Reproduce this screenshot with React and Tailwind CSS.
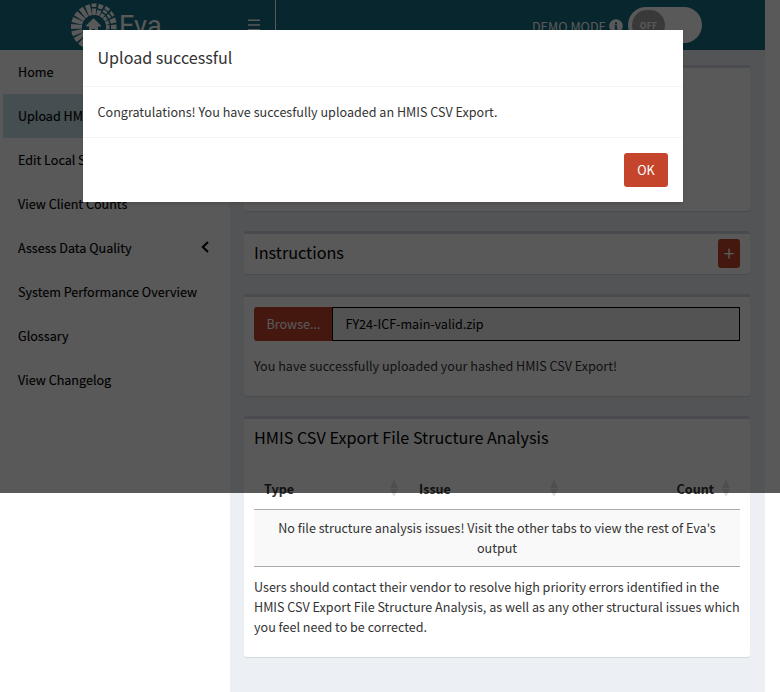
import { FaInfoCircle } from "react-icons/fa";

const NAV = [
  "Home",
  "Upload HMIS CSV Export",
  "Edit Local Settings",
  "View Client Counts",
  "Assess Data Quality",
  "System Performance Overview",
  "Glossary",
  "View Changelog",
];

// Each ray is a list of [inner, outer] radii; rays on the right are broken into segments.
const RAYS = [
  { a: -161, s: [[12, 23]] },
  { a: -143, s: [[12, 23]] },
  { a: -125, s: [[12, 23]] },
  { a: -107, s: [[12, 23]] },
  { a: -90, s: [[12, 18.5], [20, 23.5]] },
  { a: -72, s: [[12, 17.5], [19, 23.5]] },
  { a: -54, s: [[12, 16], [17.3, 20], [21, 24]] },
  { a: -36, s: [[12, 15.5], [17, 19.5], [20.8, 23.5]] },
  { a: -18, s: [[12, 15.5], [17, 23]] },
  { a: 0, s: [[12, 15.5], [17, 22.5]] },
  { a: 18, s: [[12, 23]] },
  { a: 127, s: [[12, 23]] },
  { a: 145, s: [[12, 23]] },
  { a: 163, s: [[12, 23]] },
  { a: 181, s: [[12, 23]] },
];

// Rays widen with their distance from the centre.
function segment(i, o) {
  const w = (r) => 0.8 + r * 0.075;
  return `M${94 + i} ${27 - w(i)}L${94 + o} ${27 - w(o)}V${27 + w(o)}L${94 + i} ${27 + w(i)}z`;
}

function Logo() {
  return (
    <svg className="h-[50px] w-[48px] shrink-0" viewBox="70 0 48 50" fill="white">
      {RAYS.map((r) =>
        r.s.map(([i, o]) => <path key={`${r.a}-${i}`} d={segment(i, o)} transform={`rotate(${r.a} 94 27)`} />)
      )}
      <path d="M93.5 18.200 86 25.500V26.500h3V33h3v-4h3v4h3V26.500h3V25.500z" />
    </svg>
  );
}

function Box({ className = "", children }) {
  return (
    <section className={`rounded-[3px] border-t-[3px] border-[#d2d6de] bg-white shadow-[0_1px_1px_rgba(0,0,0,0.1)] ${className}`}>
      {children}
    </section>
  );
}

function Sort() {
  return (
    <svg className="h-[17px] w-2" viewBox="0 0 8 17" fill="#dedede">
      <path d="M4 0 8 8H0zM4 17 0 9h8z" />
    </svg>
  );
}

export default function App() {
  return (
    <div className="relative h-[692px] w-[780px] overflow-hidden bg-white font-['Noto_Sans_CJK_SC',sans-serif] text-[12.58px] leading-5 text-[#333]">
      <header className="flex h-[50px] w-[765px] items-center bg-[#176d80] text-white">
        <div className="flex h-[50px] w-[230px] items-center pl-[70px]">
          <Logo />
          <span className="pl-px pt-0.5 font-['Roboto',sans-serif] text-[27px]">Eva</span>
        </div>
        <div className="flex h-[50px] w-[46px] items-center border-r border-white pl-[18px]">
          <svg className="h-3 w-3" viewBox="0 0 12 12" fill="white">
            <path d="M0 .5h12v1.400H0zM0 5.300h12v1.400H0zM0 10.100h12v1.400H0z" />
          </svg>
        </div>
        <div className="ml-auto mr-[63px] flex items-center">
          <span className="whitespace-nowrap pt-[3px]">DEMO MODE</span>
          <FaInfoCircle className="ml-[3px] mt-0.5 size-[14px]" />
          <div className="ml-[5px] flex h-9 w-[74px] items-center rounded-full bg-white pl-1">
            <span className="flex h-[30px] w-[33px] items-center justify-center rounded-full bg-[#a3a3a3] text-[8.500px] font-bold tracking-[0.3px] text-white">OFF</span>
          </div>
        </div>
      </header>

      <div className="flex w-[765px]">
        <nav className="w-[230px] bg-white text-black [-webkit-text-stroke:0.15px_black]">
          {NAV.map((n, i) => (
            <div
              key={n}
              className={`flex h-11 items-center justify-between whitespace-nowrap border-l-[3px] pl-[15px] pr-[21px] ${i === 1 ? "border-white bg-[#c6e0e6]" : "border-transparent"}`}
            >
              <span>{n}</span>
              {i === 4 && (
                <svg className="mb-[3px] h-3 w-2" viewBox="0 0 8 12" fill="none" stroke="black" strokeWidth="2">
                  <path d="M7 1 1.800 6 7 11" />
                </svg>
              )}
            </div>
          ))}
        </nav>
        <main className="flex h-[642px] w-[535px] flex-col gap-5 bg-[#ecf0f5] px-3.5 pr-[15px] pt-[15px]">
          <Box className="h-[146px]" />
          <Box className="flex h-[43px] items-start justify-between px-2.5 pt-[5px]">
            <h3 className="pt-[3px] text-[16.2px] text-black">Instructions</h3>
            <button className="flex h-[29px] w-[22px] items-center justify-center rounded-[3px] bg-[#c4442c] pb-0.5 text-[19px] text-white">+</button>
          </Box>
          <Box className="h-[102px] px-2.5 pt-2.5">
            <div className="flex h-[34px]">
              <span className="flex w-[78px] items-center justify-center rounded-l-[3px] bg-[#c4442c] pl-px text-white">Browse...</span>
              <span className="flex flex-1 items-center border border-black bg-[#eee] pl-[12.5px] text-black">FY24-ICF-main-valid.zip</span>
            </div>
            <p className="mt-[15px]">You have successfully uploaded your hashed HMIS CSV Export!</p>
          </Box>
          <Box className="h-[241px] px-2.5">
            <h3 className="pt-2 text-[16.2px] text-black">HMIS CSV Export File Structure Analysis</h3>
            <div className="mt-[21px] flex h-[42px] items-center border-b border-[#aaa] pl-2.5 pr-2.5 font-bold">
              <div className="flex w-[155px] items-center justify-between pr-[21px]"><span>Type</span><Sort /></div>
              <div className="flex w-[159px] items-center justify-between pr-[20px]"><span>Issue</span><Sort /></div>
              <div className="flex flex-1 items-center justify-end gap-2"><span>Count</span><Sort /></div>
            </div>
            <div className="flex h-[57px] items-center justify-center border-b border-[#aaa] bg-[#f9f9f9] text-center">
              <p className="whitespace-nowrap">No file structure analysis issues! Visit the other tabs to view the rest of Eva's<br />output</p>
            </div>
            <p className="mt-2.5 whitespace-nowrap">
              Users should contact their vendor to resolve high priority errors identified in the<br />
              HMIS CSV Export File Structure Analysis, as well as any other structural issues which<br />
              you feel need to be corrected.
            </p>
          </Box>
        </main>
      </div>

      <div className="absolute left-0 top-0 h-[493px] w-full bg-black/65" />
      <div className="absolute left-[83px] top-[30px] h-[172px] w-[600px] bg-white shadow-[0_2px_3px_rgba(0,0,0,0.13)]">
        <div className="flex h-[57px] items-center border-b border-[#f4f4f4] px-[14.5px] pb-0.5 text-[16.1px]">Upload successful</div>
        <div className="flex h-[51px] items-center border-b border-[#f4f4f4] px-[14.5px]">Congratulations! You have succesfully uploaded an HMIS CSV Export.</div>
        <div className="flex justify-end p-[15px]">
          <button className="h-[34px] w-11 rounded-[3px] bg-[#c4442c] text-white">OK</button>
        </div>
      </div>
    </div>
  );
}
